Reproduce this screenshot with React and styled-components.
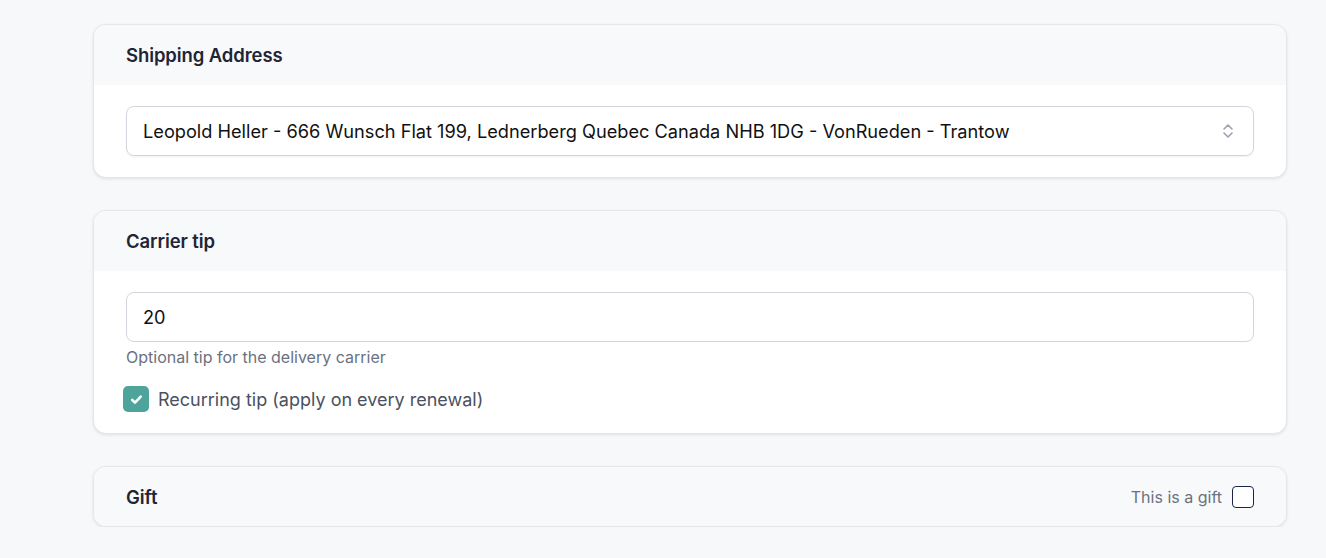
import styled, { createGlobalStyle } from "styled-components";

const GlobalStyle = createGlobalStyle`
    body {
        margin: 0;
        background: #f7f8fa;
        font-family: Inter, "Noto Sans", sans-serif;
        color: #1f2533;
    }
`;

const Page = styled.main`
    display: flex;
    flex-direction: column;
    gap: 32px;
    padding: 24px 39px 0 93px;
`;

const Card = styled.section`
    background: #fff;
    border: 1px solid #e4e6ea;
    border-radius: 13px;
    box-shadow: 0 1px 3px rgba(16, 24, 40, 0.1);
    overflow: hidden;
`;

const CardHeader = styled.header`
    display: flex;
    align-items: center;
    justify-content: space-between;
    height: 60px;
    padding: 0 32px;
    background: #f8f9fb;
`;

const Title = styled.h2`
    margin: 0;
    font-size: 18.5px;
    font-weight: 600;
    letter-spacing: -0.1px;
    color: #1f2533;
`;

const CardBody = styled.div`
    display: flex;
    flex-direction: column;
    padding: 21px 32px 21px;
`;

const SelectBox = styled.div`
    display: flex;
    align-items: center;
    justify-content: space-between;
    height: 48px;
    padding: 0 18px 0 16px;
    border: 1px solid #d3d5dc;
    border-radius: 8px;
    box-shadow: 0 1px 2px rgba(16, 24, 40, 0.06);
    font-size: 18.2px;
    color: #111;
`;

const Input = styled.div`
    display: flex;
    align-items: center;
    height: 48px;
    padding: 0 16px;
    border: 1px solid #d3d5dc;
    border-radius: 8px;
    font-size: 18.2px;
    color: #111;
`;

const Help = styled.p`
    margin: 5px 0 0;
    font-size: 16px;
    color: #6b7180;
`;

const CheckRow = styled.label`
    display: flex;
    align-items: center;
    gap: 9px;
    margin: 19px 0 0 -3px;
    font-size: 18px;
    color: #4a5160;
`;

const Check = styled.span`
    display: inline-flex;
    align-items: center;
    justify-content: center;
    box-sizing: border-box;
    width: ${(p) => (p.$checked ? "26px" : "22px")};
    height: ${(p) => (p.$checked ? "26px" : "22px")};
    border-radius: ${(p) => (p.$checked ? "5px" : "4px")};
    background: ${(p) => (p.$checked ? "#4ea49b" : "#fff")};
    border: ${(p) => (p.$checked ? "none" : "1.5px solid #1c2547")};
`;

const GiftToggle = styled.label`
    display: flex;
    align-items: center;
    gap: 10px;
    font-size: 16px;
    color: #6b7180;
`;

const GiftHeader = styled(CardHeader)`
    height: 59px;
`;

export default function App() {
    return (
        <>
            <GlobalStyle />
            <Page>
                <Card>
                    <CardHeader>
                        <Title>Shipping Address</Title>
                    </CardHeader>
                    <CardBody>
                        <SelectBox>
                            Leopold Heller - 666 Wunsch Flat 199, Lednerberg Quebec Canada NHB 1DG - VonRueden - Trantow
                            <svg width="14" height="18" viewBox="0 0 14 18" fill="none" stroke="#9aa0ad" strokeWidth="1.6" strokeLinecap="round" strokeLinejoin="round">
                                <path d="M3 7l4-4 4 4" />
                                <path d="M3 11l4 4 4-4" />
                            </svg>
                        </SelectBox>
                    </CardBody>
                </Card>
                <Card>
                    <CardHeader>
                        <Title>Carrier tip</Title>
                    </CardHeader>
                    <CardBody>
                        <Input>20</Input>
                        <Help>Optional tip for the delivery carrier</Help>
                        <CheckRow>
                            <Check $checked>
                                <svg width="15" height="15" viewBox="0 0 12 12" fill="none" stroke="#fff" strokeWidth="2.1" strokeLinecap="round" strokeLinejoin="round">
                                    <path d="M2.6 6.4l2.2 2.1 4.6-4.8" />
                                </svg>
                            </Check>
                            Recurring tip (apply on every renewal)
                        </CheckRow>
                    </CardBody>
                </Card>
                <Card>
                    <GiftHeader>
                        <Title>Gift</Title>
                        <GiftToggle>
                            This is a gift
                            <Check />
                        </GiftToggle>
                    </GiftHeader>
                </Card>
            </Page>
        </>
    );
}
